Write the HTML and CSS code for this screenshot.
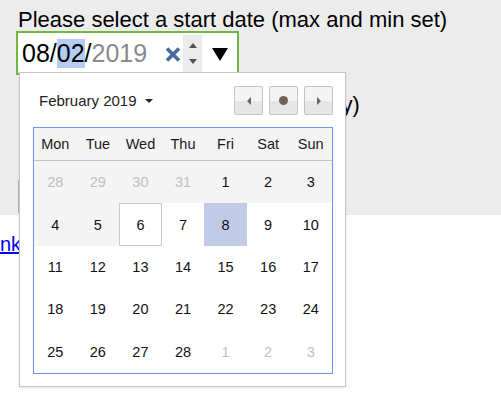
FILE: index.html
```html
<!DOCTYPE html>
<html lang="en">
<head>
    <meta charset="UTF-8">
    <title>Date picker</title>
    <link rel="stylesheet" href="styles.css">
</head>
<body>

<div class="demo">
    <label class="field-label">Please select a start date (max and min set)</label>
    <div class="date-input">
        <span class="seg">08</span><span class="sep">/</span><span class="seg seg-active">02</span><span class="sep">/</span><span class="seg seg-dim">2019</span>
        <svg class="clear" width="16" height="15" viewBox="0 0 16 15">
            <path d="M2 1.5 L14 13.5 M14 1.5 L2 13.5" stroke="#4a6a9f" stroke-width="3.6" fill="none"/>
        </svg>
        <span class="spin"><span class="up"></span><span class="down"></span></span>
        <span class="drop"></span>
    </div>

    <label class="field-label second">Please select a start date (min only)</label>
    <div class="plain-input"></div>
</div>

<p class="links"><a href="#">nk</a></p>

<div class="picker">
    <div class="picker-head">
        <span class="month">February 2019<span class="caret"></span></span>
        <div class="nav">
            <button class="nav-btn"><span class="tri-left"></span></button>
            <button class="nav-btn"><span class="dot"></span></button>
            <button class="nav-btn"><span class="tri-right"></span></button>
        </div>
    </div>
    <div class="cal">
        <div class="dow">Mon</div><div class="dow">Tue</div><div class="dow">Wed</div><div class="dow">Thu</div><div class="dow">Fri</div><div class="dow">Sat</div><div class="dow">Sun</div>

        <div class="day off other">28</div><div class="day off other">29</div><div class="day off other">30</div><div class="day off other">31</div><div class="day off">1</div><div class="day off">2</div><div class="day off">3</div>

        <div class="day off">4</div><div class="day off">5</div><div class="day today">6</div><div class="day">7</div><div class="day selected">8</div><div class="day">9</div><div class="day">10</div>

        <div class="day">11</div><div class="day">12</div><div class="day">13</div><div class="day">14</div><div class="day">15</div><div class="day">16</div><div class="day">17</div>

        <div class="day">18</div><div class="day">19</div><div class="day">20</div><div class="day">21</div><div class="day">22</div><div class="day">23</div><div class="day">24</div>

        <div class="day">25</div><div class="day">26</div><div class="day">27</div><div class="day">28</div><div class="day other">1</div><div class="day other">2</div><div class="day other">3</div>
    </div>
</div>

</body>
</html>
```

FILE: styles.css
```css
/* page */
body {
    margin: 0;
    font-family: "Liberation Sans", Arial, sans-serif;
    color: #000;
    background-color: #fff;
}
.demo {
    background-color: #ececec;
    height: 215px;
    padding: 8px 0 0 18px;
    box-sizing: border-box;
}
.field-label {
    display: block;
    font-size: 22px;
    line-height: 23px;
}
.field-label.second {
    margin-top: 19px;
    font-size: 21.5px;
}

/* the date field */
.date-input {
    display: inline-flex;
    align-items: center;
    margin-left: -2px;
    width: 223px;
    height: 44px;
    box-sizing: border-box;
    border: 2px solid #72b843;
    background-color: #fff;
    padding: 0 0 0 4px;
    font-size: 25px;
}
.seg-active {
    background-color: #b5cdf2;
}
.seg-dim {
    color: #8a8a8a;
}
.clear {
    margin-left: 18px;
    margin-top: 3px;
}
.spin {
    display: flex;
    flex-direction: column;
    justify-content: space-between;
    align-items: center;
    margin-left: 2px;
    width: 19px;
    height: 37px;
    padding: 8px 0 8px;
    box-sizing: border-box;
    background-color: #ececec;
}
.spin .up, .spin .down {
    width: 0;
    height: 0;
    border-left: 4px solid transparent;
    border-right: 4px solid transparent;
}
.spin .up {
    border-bottom: 5px solid #5b5246;
}
.spin .down {
    border-top: 5px solid #5b5246;
}
.drop {
    margin-left: 10px;
    margin-top: 2px;
    width: 0;
    height: 0;
    border-left: 8.5px solid transparent;
    border-right: 8.5px solid transparent;
    border-top: 13px solid #000;
}
.plain-input {
    margin-top: 63px;
    width: 200px;
    height: 33px;
    border-left: 1px solid #b9b9b9;
}

.links {
    margin: 18px 0 0;
    font-size: 20px;
}
.links a {
    color: #0000ee;
}

/* popup calendar */
.picker {
    position: absolute;
    left: 19px;
    top: 72px;
    width: 327px;
    height: 315px;
    box-sizing: border-box;
    border: 1px solid #c6c6c6;
    background-color: #fff;
    padding: 13px 12px 12px 13px;
    box-shadow: 0 1px 2px rgba(0, 0, 0, 0.1);
}
.picker-head {
    display: flex;
    justify-content: space-between;
    align-items: center;
    height: 29px;
    margin-bottom: 12px;
}
.month {
    display: flex;
    align-items: center;
    padding-left: 6px;
    font-size: 15px;
    color: #222;
}
.caret {
    margin-left: 8px;
    width: 0;
    height: 0;
    border-left: 4px solid transparent;
    border-right: 4px solid transparent;
    border-top: 4px solid #222;
}
.nav {
    display: flex;
    gap: 6px;
}
.nav-btn {
    display: flex;
    justify-content: center;
    align-items: center;
    width: 29px;
    height: 29px;
    padding: 0;
    border: 1px solid #c4c4c4;
    border-radius: 2px;
    background: linear-gradient(#f4f4f4 50%, #e6e6e6 50%);
}
.tri-left, .tri-right {
    width: 0;
    height: 0;
    border-top: 4px solid transparent;
    border-bottom: 4px solid transparent;
}
.tri-left {
    border-right: 4px solid #666;
}
.tri-right {
    border-left: 4px solid #666;
}
.dot {
    width: 9px;
    height: 9px;
    border-radius: 50%;
    background-color: #6d635a;
}

.cal {
    display: grid;
    grid-template-columns: repeat(7, 1fr);
    grid-template-rows: 33px repeat(5, 1fr);
    height: 247px;
    box-sizing: border-box;
    border: 1px solid #7095ee;
    font-size: 14.5px;
}
.dow {
    display: flex;
    justify-content: center;
    align-items: center;
    background-color: #f4f4f4;
    border-bottom: 1px solid #c4c4c4;
    color: #1a1a1a;
}
.day {
    display: flex;
    justify-content: center;
    align-items: center;
    color: #111;
}
.day.off {
    background-color: #f4f4f4;
}
.day.other {
    color: #c0c0c0;
}
.day.today {
    border: 1px solid #cacaca;
}
.day.selected {
    background-color: #c1cbe8;
}
```
